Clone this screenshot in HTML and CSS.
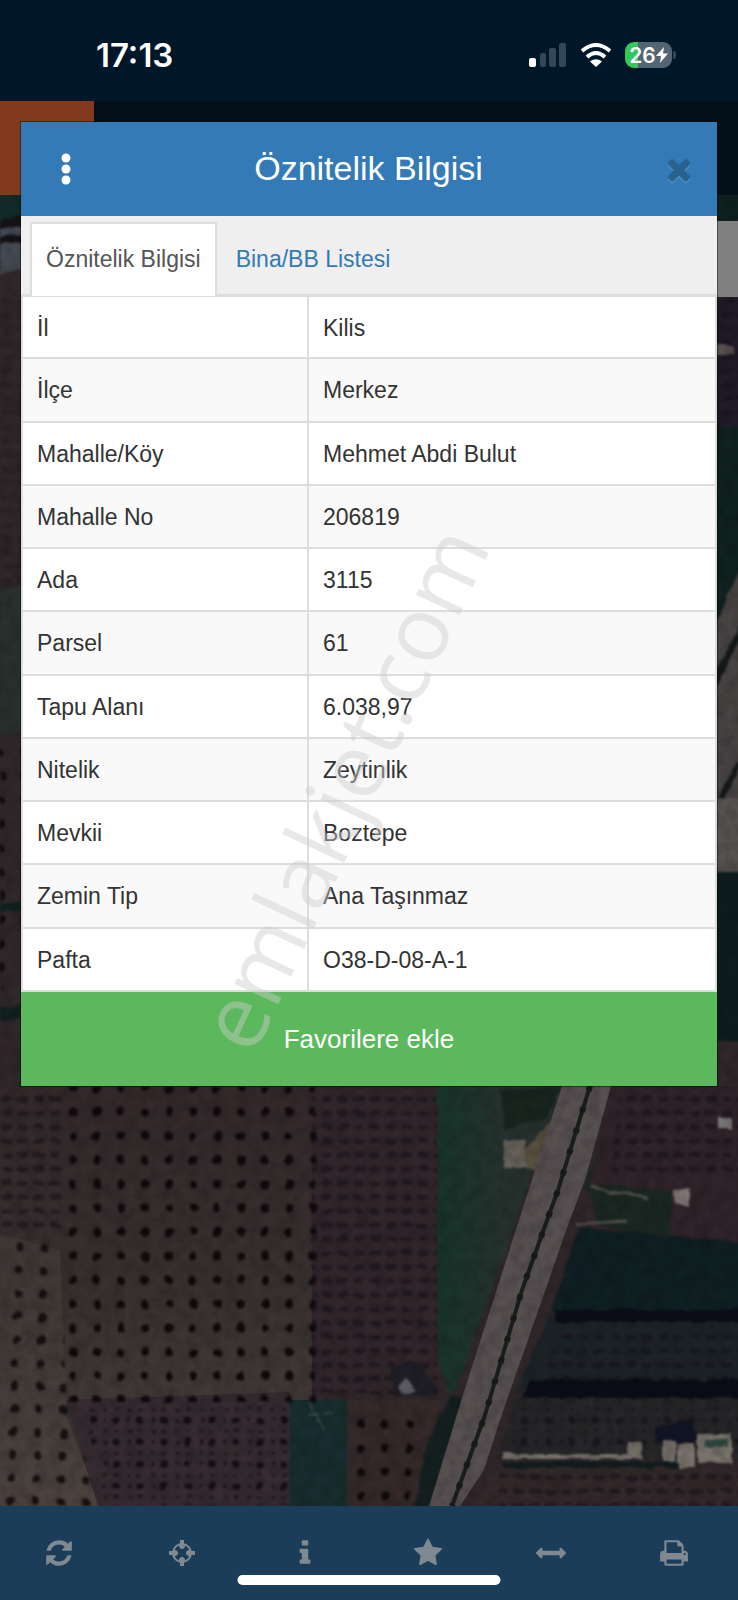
FILE: index.html
```html
<!DOCTYPE html>
<html lang="tr">

<head>
  <meta charset="UTF-8" />
  <meta name="viewport" content="width=device-width, initial-scale=1.0" />
  <title>Öznitelik Bilgisi</title>
  <link rel="stylesheet" href="styles.css">
</head>

<body>
  <div class="screen">
    <header class="status-bar">
      <span class="time">17:13</span>
      <div class="status-icons">
        <svg class="signal" viewBox="0 0 38 24">
          <rect x="0" y="15" width="7" height="9" rx="2" fill="#fff" />
          <rect x="11" y="10" width="6" height="14" rx="2" />
          <rect x="20" y="5" width="7" height="19" rx="2" />
          <rect x="30" y="0" width="7" height="24" rx="2" />
        </svg>
        <svg class="wifi" viewBox="0 0 32 24">
          <path d="M2 8Q16-4 30 8" />
          <path d="M7 14Q16 6 25 14" />
          <path class="wifi-dot" d="M10 18.500Q16 14 22 18.500L16 24Z" />
        </svg>
        <div class="battery">
          <span>26</span>
          <svg viewBox="0 0 12 16">
            <path d="M8 0L0 9H5L4 16L12 6.500H7Z" />
          </svg>
        </div>
      </div>
    </header>

    <div class="app-bar">
      <div class="app-menu"></div>
    </div>

    <main class="map">
      <svg class="satellite" viewBox="0 195 738 1311" preserveAspectRatio="xMidYMax slice" color-interpolation-filters="sRGB">
        <defs>
          <pattern id="trees" width="24" height="24" patternUnits="userSpaceOnUse" x="61" y="1100">
            <ellipse cx="12" cy="12" rx="4" ry="4.500" fill="#0f0b0d" />
          </pattern>
          <pattern id="treesWide" width="25" height="23" patternUnits="userSpaceOnUse" x="1" y="1234" patternTransform="rotate(2)">
            <ellipse cx="12" cy="12" rx="4" ry="4.500" fill="#151211" />
          </pattern>
          <pattern id="treesSmall" width="24" height="22" patternUnits="userSpaceOnUse" x="104" y="1408">
            <circle cx="12" cy="12" r="3.500" fill="#150f15" />
            <circle cx="1" cy="12" r="2" fill="#1c151b" />
            <circle cx="12" cy="1" r="2" fill="#1c151b" />
            <circle cx="1" cy="1" r="2" fill="#1c151b" />
          </pattern>
          <pattern id="rows" width="16" height="14" patternUnits="userSpaceOnUse">
            <ellipse cx="7" cy="7" rx="6" ry="3" fill="#17121c" opacity=".6" />
          </pattern>
          <filter id="rough" x="0" y="0" width="100%" height="100%">
            <feTurbulence type="fractalNoise" baseFrequency=".07" numOctaves="2" seed="4" result="n" />
            <feDisplacementMap in="SourceGraphic" in2="n" scale="6" xChannelSelector="R" yChannelSelector="G" />
            <feGaussianBlur stdDeviation="1" />
          </filter>
          <filter id="grain" x="0" y="0" width="100%" height="100%">
            <feTurbulence type="fractalNoise" baseFrequency=".08" numOctaves="3" seed="9" />
            <feColorMatrix values="0 0 0 0 .02  0 0 0 0 .03  0 0 0 0 .04  1.200 0 0 0 -.4" />
          </filter>
          <linearGradient id="soil" x1="0" y1="0" x2="0" y2="1">
            <stop offset="0" stop-color="#33282a" />
            <stop offset=".5" stop-color="#383130" />
            <stop offset="1" stop-color="#4a413e" />
          </linearGradient>
          <linearGradient id="grass" x1="0" y1="0" x2="1" y2="0">
            <stop offset="0" stop-color="#17352a" />
            <stop offset=".5" stop-color="#26322e" />
            <stop offset="1" stop-color="#272e2c" />
          </linearGradient>
        </defs>

        <rect x="-100" y="100" width="938" height="1500" fill="#30272a" />

        <!-- fields on the left edge -->
        <g filter="url(#rough)">
          <path d="M0 195H40V215L0 222Z" fill="#102c2a" />
          <path d="M0 225L40 218V262L0 275Z" fill="#454b53" />
          <path d="M0 220L40 210V222L0 230ZM0 238L40 232V240L0 244Z" fill="#141318" />
          <rect y="300" width="40" height="290" fill="url(#rows)" opacity=".4" />
          <path d="M0 590L40 582V725L0 738Z" fill="#29312e" />
          <rect y="735" width="40" height="255" fill="url(#trees)" />
          <path d="M0 905L40 898V908L0 912ZM0 1008L40 1000V1014L0 1022Z" fill="#10211f" />
        </g>

        <!-- road and fields on the right edge -->
        <g filter="url(#rough)">
          <rect x="700" y="195" width="60" height="26" fill="#0e201f" />
          <rect x="700" y="297" width="60" height="130" fill="#211b28" />
          <rect x="700" y="300" width="60" height="120" fill="url(#rows)" />
          <rect x="700" y="345" width="34" height="9" fill="#57504f" />
          <rect x="700" y="427" width="60" height="230" fill="#10211f" />
          <path d="M760 520L700 660V800H760Z" fill="#484343" />
          <path d="M750 610L700 715" stroke="#141918" stroke-width="7" />
          <path d="M750 740L716 810" stroke="#141918" stroke-width="5" />
          <rect x="700" y="798" width="60" height="74" fill="#56524f" />
          <rect x="700" y="872" width="60" height="170" fill="#0e1c1e" />
        </g>

        <!-- olive groves -->
        <path d="M0 1086H312V1402L62 1404L100 1506H0Z" fill="url(#soil)" />
        <path d="M0 1234L60 1250L66 1395L100 1506H0Z" fill="#4e453f" opacity=".4" />
        <path d="M66 1400L290 1392V1506H98Z" fill="#352b30" />
        <path d="M312 1086H440V1394H312Z" fill="#32262b" />
        <path d="M340 1400H440L420 1506H340Z" fill="#35292a" />
        <path d="M290 1400H347V1506H290Z" fill="#182d2f" />
        <g filter="url(#rough)">
          <path d="M61 1086H316V1402H61Z" fill="url(#trees)" />
          <path d="M0 1234H60L66 1395L100 1506H0Z" fill="url(#treesWide)" />
          <path d="M0 1095H62V1232H0Z" fill="url(#rows)" />
          <path d="M84 1404H288V1506H104Z" fill="url(#treesSmall)" />
          <path d="M312 1086H438V1394H312Z" fill="url(#rows)" />
          <path d="M344 1404H430L408 1506H344Z" fill="url(#trees)" />
          <path d="M308 1402L324 1430M310 1416L334 1412" stroke="#52625a" />
        </g>

        <!-- green strip, villas and gardens -->
        <g filter="url(#rough)">
          <path d="M438 1086H565L452 1400L438 1360Z" fill="url(#grass)" />
          <path d="M504 1140H525V1168H504Z" fill="#66615a" />
          <path d="M552 1120L525 1150V1168L538 1170Z" fill="#58503f" />
          <path d="M500 1090L560 1086L548 1118L505 1130Z" fill="#17251e" />
          <path d="M390 1366L418 1362L440 1392L395 1396Z" fill="#1f1d25" />
          <path d="M398 1386L408 1378L416 1392L402 1395Z" fill="#5a5a61" />
          <path d="M450 1395L425 1450L415 1506H432L462 1398Z" fill="#14201f" />
          <path d="M610 1086H760V1245L590 1228L600 1140Z" fill="#302329" />
          <path d="M620 1086H760V1180H610Z" fill="url(#rows)" />
          <path d="M608 1130L585 1185L600 1225L670 1240L672 1190L590 1184Z" fill="#1b2722" />
          <path d="M590 1187L648 1198M576 1224L628 1221" stroke="#4f5049" stroke-width="3" />
          <path d="M673 1190L690 1188V1208L675 1204Z" fill="#827575" />
          <path d="M718 1118H732V1129H718Z" fill="#797775" />
          <path d="M580 1228L760 1244V1315L550 1312Z" fill="#0f1f22" />
          <path d="M552 1312H760V1402L515 1392Z" fill="#1c2326" />
          <path d="M560 1325H760V1380H540Z" fill="url(#rows)" />
          <path d="M555 1310H760V1322H556ZM530 1380H760V1398H522Z" fill="#0a0d16" />
          <path d="M515 1398H760V1460H498Z" fill="#262527" />
          <path d="M520 1400H760V1450H505Z" fill="url(#treesSmall)" opacity=".7" />
          <path d="M655 1427L690 1420L700 1442H655Z" fill="#101424" />
          <path d="M503 1454H640V1459H503ZM628 1442H642V1459H628ZM662 1440H676V1462H662ZM678 1443H694V1468H678ZM697 1434H732V1462H697Z" fill="#77726a" />
          <path d="M705 1439H728V1447H705Z" fill="#304a43" />
          <path d="M504 1462H680V1468H504Z" fill="#111d1d" />
          <path d="M495 1468H760V1506H470Z" fill="#33282a" />
          <path d="M500 1470H760V1506H490Z" fill="url(#rows)" />
        </g>

        <!-- dual carriageway -->
        <path d="M562 1086H611L585 1180L568 1225L500 1420L484 1470L460 1506H429L462 1398Z" fill="#575051" />
        <path d="M590 1086L558 1190L522 1290L485 1415L452 1506" fill="none" stroke="#1b1f1c" stroke-width="4" />
        <path d="M590 1086L558 1190L522 1290L485 1415L452 1506" fill="none" stroke="#171b18" stroke-width="6" stroke-dasharray="5 17" />

        <rect x="-100" y="195" width="938" height="1311" filter="url(#grain)" opacity=".3" />
      </svg>
      <button class="map-control" aria-label="Katmanlar"></button>
    </main>

    <nav class="toolbar">
      <button aria-label="Yenile">
        <svg viewBox="0 0 1792 1792"><path d="M1639 1056q0 5-1 7-64 268-268 434.500t-478 166.500q-146 0-282.500-55t-243.500-157l-129 129q-19 19-45 19t-45-19-19-45v-448q0-26 19-45t45-19h448q26 0 45 19t19 45-19 45l-137 137q71 66 161 102t187 36q134 0 250-65t186-179q11-17 53-117 8-23 30-23h192q13 0 22.500 9.500t9.500 22.500zm25-800v448q0 26-19 45t-45 19h-448q-26 0-45-19t-19-45 19-45l138-138q-148-137-349-137-134 0-250 65t-186 179q-11 17-53 117-8 23-30 23h-199q-13 0-22.500-9.500t-9.500-22.500v-7q65-268 270-434.500t480-166.500q146 0 284 55.500t245 156.500l130-129q19-19 45-19t45 19 19 45z" /></svg>
      </button>
      <button aria-label="Konum">
        <svg viewBox="0 0 30 30">
          <circle cx="15" cy="15" r="9" fill="none" stroke="currentColor" stroke-width="2" />
          <path d="M13 2h4v4l1 1v2l-2 2h-2l-2-2v-2l1-1zM13 28h4v-4l1-1v-2l-2-2h-2l-2 2v2l1 1zM2 13v4h4l1 1h2l2-2v-2l-2-2h-2l-1 1zM28 13v4h-4l-1 1h-2l-2-2v-2l2-2h2l1 1z" />
        </svg>
      </button>
      <button aria-label="Bilgi">
        <svg viewBox="0 0 1792 1792"><path d="M1216 1344v128q0 26-19 45t-45 19h-512q-26 0-45-19t-19-45v-128q0-26 19-45t45-19h64v-384h-64q-26 0-45-19t-19-45v-128q0-26 19-45t45-19h384q26 0 45 19t19 45v576h64q26 0 45 19t19 45zm-128-1152v192q0 26-19 45t-45 19h-256q-26 0-45-19t-19-45v-192q0-26 19-45t45-19h256q26 0 45 19t19 45z" /></svg>
      </button>
      <button aria-label="Favoriler">
        <svg viewBox="0 0 1792 1792"><path d="M1728 647q0 22-26 48l-363 354 86 500q1 7 1 20 0 21-10.500 35.500t-30.500 14.500q-19 0-40-12l-449-236-449 236q-22 12-40 12-21 0-31.500-14.500t-10.500-35.500q0-6 2-20l86-500-364-354q-25-27-25-48 0-37 56-46l502-73 225-455q19-41 49-41t49 41l225 455 502 73q56 9 56 46z" /></svg>
      </button>
      <button aria-label="Ölçüm">
        <svg viewBox="0 0 1792 1792"><path d="M1792 896q0 26-19 45l-256 256q-19 19-45 19t-45-19-19-45v-128h-1024v128q0 26-19 45t-45 19-45-19l-256-256q-19-19-19-45t19-45l256-256q19-19 45-19t45 19 19 45v128h1024v-128q0-26 19-45t45-19 45 19l256 256q19 19 19 45z" /></svg>
      </button>
      <button aria-label="Yazdır">
        <svg viewBox="0 0 1792 1792"><path d="M448 1536h896v-256h-896v256zm0-640h896v-384h-160q-40 0-68-28t-28-68v-160h-640v640zm1152 64q0-26-19-45t-45-19-45 19-19 45 19 45 45 19 45-19 19-45zm128 0v416q0 13-9.500 22.500t-22.500 9.500h-224v160q0 40-28 68t-68 28h-960q-40 0-68-28t-28-68v-160h-224q-13 0-22.500-9.500t-9.500-22.500v-416q0-79 56.500-135.500t135.500-56.500h64v-544q0-40 28-68t68-28h672q40 0 88 20t76 48l152 152q28 28 48 76t20 88v256h64q79 0 135.500 56.500t56.500 135.500z" /></svg>
      </button>
      <div class="home-indicator"></div>
    </nav>

    <section class="modal" role="dialog" aria-labelledby="modalTitle">
      <div class="modal-header">
        <button class="menu-btn" aria-label="Menü">
          <svg viewBox="0 0 10 32">
            <circle cx="5" cy="5" r="4.500" />
            <circle cx="5" cy="16" r="4.500" />
            <circle cx="5" cy="27" r="4.500" />
          </svg>
        </button>
        <h2 id="modalTitle">Öznitelik Bilgisi</h2>
        <button class="close-btn" aria-label="Kapat">
          <svg viewBox="0 0 1792 1792"><path d="M1490 1322q0 40-28 68l-136 136q-28 28-68 28t-68-28l-294-294-294 294q-28 28-68 28t-68-28l-136-136q-28-28-28-68t28-68l294-294-294-294q-28-28-28-68t28-68l136-136q28-28 68-28t68 28l294 294 294-294q28-28 68-28t68 28l136 136q28 28 28 68t-28 68l-294 294 294 294q28 28 28 68z" /></svg>
        </button>
      </div>

      <div class="tabs">
        <a href="#oznitelik" class="tab active">Öznitelik Bilgisi</a>
        <a href="#bina" class="tab">Bina/BB Listesi</a>
      </div>

      <table id="oznitelik">
        <tbody>
          <tr><th scope="row">İl</th><td>Kilis</td></tr>
          <tr><th scope="row">İlçe</th><td>Merkez</td></tr>
          <tr><th scope="row">Mahalle/Köy</th><td>Mehmet Abdi Bulut</td></tr>
          <tr><th scope="row">Mahalle No</th><td>206819</td></tr>
          <tr><th scope="row">Ada</th><td>3115</td></tr>
          <tr><th scope="row">Parsel</th><td>61</td></tr>
          <tr><th scope="row">Tapu Alanı</th><td>6.038,97</td></tr>
          <tr><th scope="row">Nitelik</th><td>Zeytinlik</td></tr>
          <tr><th scope="row">Mevkii</th><td>Boztepe</td></tr>
          <tr><th scope="row">Zemin Tip</th><td>Ana Taşınmaz</td></tr>
          <tr><th scope="row">Pafta</th><td>O38-D-08-A-1</td></tr>
        </tbody>
      </table>

      <button class="favorite-btn">Favorilere ekle</button>
      <span class="watermark">emlakjet.com</span>
    </section>
  </div>
</body>

</html>
```
FILE: styles.css
```css
* {
  box-sizing: border-box;
}

body {
  margin: 0;
  background: #00172a;
  font-family: "Liberation Sans", Arial, sans-serif;
}

button {
  padding: 0;
  border: none;
  background: none;
  font-family: inherit;
  cursor: pointer;
}

svg {
  display: block;
  fill: currentColor;
}

.screen {
  position: relative;
  display: flex;
  flex-direction: column;
  min-height: 100vh;
}

/* Status bar */
.status-bar {
  display: flex;
  justify-content: space-between;
  align-items: center;
  height: 101px;
  padding: 9px 62px 0 96px;
  background: #00172a;
  color: #fff;
  font-family: Inter, sans-serif;
}

.time {
  font-size: 33px;
  font-weight: 600;
}

.status-icons {
  display: flex;
  align-items: center;
  gap: 13px;
}

.signal {
  width: 38px;
  height: 24px;
  fill: #33475a;
}

.wifi {
  width: 32px;
  height: 24px;
  fill: none;
  stroke: #fff;
  stroke-width: 4;
}

.wifi .wifi-dot {
  fill: #fff;
  stroke: none;
}

.battery {
  position: relative;
  display: flex;
  justify-content: center;
  align-items: center;
  width: 47px;
  height: 26px;
  margin-right: 4px;
  border-radius: 9px;
  background: linear-gradient(90deg, #34c759 27%, #536572 27%);
  font-size: 21px;
  font-weight: 600;
}

.battery svg {
  width: 12px;
  height: 16px;
}

.battery::after {
  content: "";
  position: absolute;
  top: 9px;
  right: -4px;
  width: 3px;
  height: 8px;
  border-radius: 0 3px 3px 0;
  background: #33475a;
}

/* Page behind the modal */
.app-bar {
  height: 94px;
  background: #020f18;
}

.app-menu {
  width: 94px;
  height: 100%;
  background: #813b1c;
}

.map {
  position: relative;
  flex: 1;
  min-height: 900px;
  overflow: hidden;
}

.satellite {
  position: absolute;
  width: 100%;
  height: 100%;
}

.map-control {
  position: absolute;
  top: 26px;
  right: 0;
  width: 76px;
  height: 76px;
  background: #808080;
}

.toolbar {
  position: relative;
  display: grid;
  grid-template-columns: repeat(6, 1fr);
  height: 94px;
  background: #1b3d5a;
}

.toolbar button {
  display: flex;
  justify-content: center;
  align-items: center;
  padding-right: 5px;
  color: #808890;
}

.toolbar svg {
  width: 30px;
  height: 30px;
}

.home-indicator {
  position: absolute;
  bottom: 15px;
  left: 50%;
  width: 263px;
  height: 10px;
  border-radius: 5px;
  background: #fff;
  transform: translateX(-50%);
}

/* Modal */
.modal {
  position: absolute;
  top: 122px;
  left: 21px;
  right: 21px;
  overflow: hidden;
  background: #fff;
  box-shadow: 0 0 0 1px rgba(0, 0, 0, 0.4);
}

.modal-header {
  display: grid;
  grid-template-columns: 34px 1fr 34px;
  align-items: center;
  height: 94px;
  padding: 0 21px 0 28px;
  background: #337ab7;
  color: #fff;
}

.modal-header h2 {
  margin: 0;
  padding: 0 8px 2px 0;
  font-size: 34px;
  font-weight: normal;
  text-align: center;
}

.menu-btn {
  display: flex;
  justify-content: center;
  color: #fff;
}

.menu-btn svg {
  width: 10px;
  height: 32px;
}

.close-btn {
  color: #29628f;
}

.close-btn svg {
  width: 34px;
  height: 34px;
  filter: drop-shadow(0 2px 0 #4c8dc4);
}

.tabs {
  display: flex;
  height: 81px;
  padding: 6px 9px 0;
  border-bottom: 3px solid #ddd;
  background: #efefef;
}

.tab {
  display: flex;
  align-items: center;
  margin-right: 3px;
  margin-bottom: -2px;
  padding: 0 14px 2px;
  border: 2px solid transparent;
  border-bottom: none;
  color: #337ab7;
  font-size: 23px;
  text-decoration: none;
}

.tab.active {
  border-color: #ddd;
  background: #fff;
  color: #555;
}

table {
  width: 100%;
  height: 695px;
  border-collapse: collapse;
  table-layout: fixed;
  color: #333;
  font-size: 23px;
}

tr:nth-child(even) {
  background: #f9f9f9;
}

th,
td {
  padding: 2px 14px 0;
  border: 2px solid #ddd;
  border-top: none;
  text-align: left;
  font-weight: normal;
}

th {
  width: 286px;
}

.favorite-btn {
  display: block;
  width: 100%;
  height: 94px;
  background: #5cb85c;
  color: #fff;
  font-size: 26px;
}

.watermark {
  position: absolute;
  top: 69%;
  left: 46%;
  color: rgba(205, 205, 205, 0.45);
  font-family: "Open Sans", sans-serif;
  font-size: 90px;
  white-space: nowrap;
  transform: translate(-50%, -50%) rotate(-65deg);
  pointer-events: none;
}
```
